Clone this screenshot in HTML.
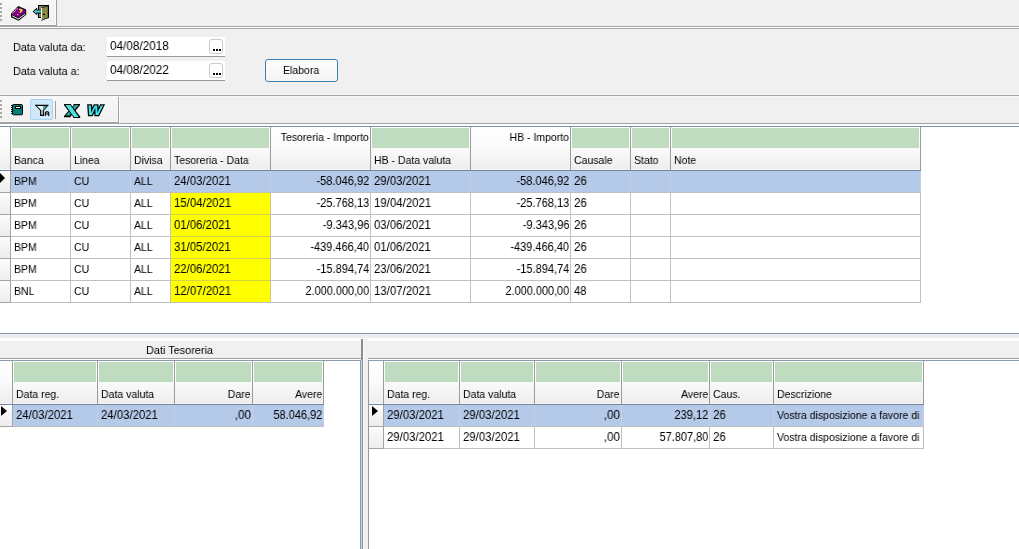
<!DOCTYPE html>
<html><head><meta charset="utf-8"><style>
html,body{margin:0;padding:0;}
body{width:1019px;height:549px;overflow:hidden;position:relative;background:#f0f0f0;font-family:"Liberation Sans", sans-serif;color:#000;}
body>div,body>span,body>svg{position:absolute;box-sizing:content-box;}
svg{will-change:transform;}
.t{white-space:nowrap;line-height:1;will-change:transform;}
</style></head><body>
<div style="left:0px;top:0px;width:57px;height:25px;background:linear-gradient(#f8f8f8,#f0f0f0);"></div><div style="left:56px;top:0px;width:1px;height:25px;background:#a0a0a0;"></div><div style="left:55px;top:0px;width:1px;height:24px;background:#fafafa;"></div><div style="left:0px;top:24px;width:55px;height:1px;background:#fafafa;"></div><div style="left:0px;top:25px;width:57px;height:1px;background:#a0a0a0;"></div><div style="left:0px;top:3px;width:2px;height:2px;background:#a8a8a8;"></div><div style="left:0px;top:7px;width:2px;height:2px;background:#a8a8a8;"></div><div style="left:0px;top:11px;width:2px;height:2px;background:#a8a8a8;"></div><div style="left:0px;top:15px;width:2px;height:2px;background:#a8a8a8;"></div><div style="left:0px;top:19px;width:2px;height:2px;background:#a8a8a8;"></div><div style="left:0px;top:26px;width:1019px;height:1px;background:#a4a4a4;"></div><div style="left:0px;top:27px;width:1019px;height:1px;background:#ffffff;"></div><div style="left:0px;top:28px;width:1019px;height:1px;background:#a4a4a4;"></div><div style="left:0px;top:94px;width:1019px;height:1px;background:#fafafa;"></div><div style="left:0px;top:95px;width:1019px;height:1px;background:#a4a4a4;"></div><div style="left:0px;top:96px;width:1019px;height:1px;background:#f8f8f8;"></div><div style="left:0px;top:97px;width:119px;height:25px;background:linear-gradient(#f8f8f8,#f0f0f0);"></div><div style="left:118px;top:97px;width:1px;height:26px;background:#a0a0a0;"></div><div style="left:117px;top:97px;width:1px;height:24px;background:#fafafa;"></div><div style="left:0px;top:121px;width:117px;height:1px;background:#fafafa;"></div><div style="left:0px;top:122px;width:119px;height:1px;background:#a0a0a0;"></div><div style="left:119px;top:97px;width:1px;height:26px;background:#fcfcfc;"></div><div style="left:0px;top:123px;width:1019px;height:1px;background:#a4a4a4;"></div><div style="left:0px;top:124px;width:1019px;height:2px;background:#ffffff;"></div><div style="left:0px;top:100px;width:2px;height:2px;background:#a8a8a8;"></div><div style="left:0px;top:104px;width:2px;height:2px;background:#a8a8a8;"></div><div style="left:0px;top:108px;width:2px;height:2px;background:#a8a8a8;"></div><div style="left:0px;top:112px;width:2px;height:2px;background:#a8a8a8;"></div><div style="left:0px;top:116px;width:2px;height:2px;background:#a8a8a8;"></div><div style="left:30px;top:99px;width:21px;height:19px;background:#cfe8fa;border:1px solid #aad4f2;border-radius:2px;"></div><div style="left:55px;top:101px;width:1px;height:18px;background:#a0a0a0;"></div><div style="left:0px;top:127px;width:1019px;height:206px;background:#ffffff;"></div><div style="left:0px;top:126px;width:1019px;height:1px;background:#8390a0;"></div><span class="t " style="left:13px;top:41.16px;font-size:11.62px;transform:scaleX(0.9294);transform-origin:left;">Data valuta da:</span><span class="t " style="left:13px;top:65.16px;font-size:11.62px;transform:scaleX(0.9294);transform-origin:left;">Data valuta a:</span><div style="left:107px;top:37px;width:118px;height:19px;background:#fff;border-bottom:1px solid #9a9a9a;"></div><span class="t" style="left:109.5px;top:39.6727px;font-size:12.2px;transform:scaleX(0.9625);transform-origin:left;">04/08/2018</span><div style="left:209px;top:39px;width:12px;height:13px;background:#fff;border:1px solid #cacaca;border-radius:3px;"></div><div style="left:213px;top:49px;width:2px;height:2px;background:#000;"></div><div style="left:216px;top:49px;width:2px;height:2px;background:#000;"></div><div style="left:219px;top:49px;width:2px;height:2px;background:#000;"></div><div style="left:107px;top:61px;width:118px;height:19px;background:#fff;border-bottom:1px solid #9a9a9a;"></div><span class="t" style="left:109.5px;top:63.6727px;font-size:12.2px;transform:scaleX(0.9641);transform-origin:left;">04/08/2022</span><div style="left:209px;top:63px;width:12px;height:13px;background:#fff;border:1px solid #cacaca;border-radius:3px;"></div><div style="left:213px;top:73px;width:2px;height:2px;background:#000;"></div><div style="left:216px;top:73px;width:2px;height:2px;background:#000;"></div><div style="left:219px;top:73px;width:2px;height:2px;background:#000;"></div><div style="left:265px;top:59px;width:71px;height:21px;border:1px solid #3c7fb1;border-radius:3px;background:linear-gradient(#fdfdfd,#f4f4f4);"></div><span class="t " style="left:283px;top:65.44px;font-size:11.30px;transform:scaleX(0.9294);transform-origin:left;">Elabora</span><div style="left:0px;top:127px;width:921px;height:43px;background:linear-gradient(#ffffff 0%,#fafafa 50%,#ededed 100%);"></div><div style="left:0px;top:170px;width:921px;height:1px;background:#76869a;"></div><div style="left:0px;top:169px;width:921px;height:1px;background:#f6f8fb;"></div><div style="left:11px;top:171px;width:909px;height:21px;background:#b5c9e8;"></div><div style="left:0px;top:192px;width:921px;height:1px;background:#c0c0c0;"></div><div style="left:0px;top:214px;width:921px;height:1px;background:#c0c0c0;"></div><div style="left:0px;top:236px;width:921px;height:1px;background:#c0c0c0;"></div><div style="left:0px;top:258px;width:921px;height:1px;background:#c0c0c0;"></div><div style="left:0px;top:280px;width:921px;height:1px;background:#c0c0c0;"></div><div style="left:0px;top:302px;width:921px;height:1px;background:#c0c0c0;"></div><div style="left:171px;top:193px;width:99px;height:21px;background:#ffff00;"></div><div style="left:171px;top:215px;width:99px;height:21px;background:#ffff00;"></div><div style="left:171px;top:237px;width:99px;height:21px;background:#ffff00;"></div><div style="left:171px;top:259px;width:99px;height:21px;background:#ffff00;"></div><div style="left:171px;top:281px;width:99px;height:21px;background:#ffff00;"></div><div style="left:0px;top:171px;width:10px;height:21px;background:linear-gradient(#fcfcfc,#ededed);"></div><div style="left:0px;top:192px;width:10px;height:1px;background:#a4a4a4;"></div><div style="left:0px;top:193px;width:10px;height:21px;background:linear-gradient(#fcfcfc,#ededed);"></div><div style="left:0px;top:214px;width:10px;height:1px;background:#a4a4a4;"></div><div style="left:0px;top:215px;width:10px;height:21px;background:linear-gradient(#fcfcfc,#ededed);"></div><div style="left:0px;top:236px;width:10px;height:1px;background:#a4a4a4;"></div><div style="left:0px;top:237px;width:10px;height:21px;background:linear-gradient(#fcfcfc,#ededed);"></div><div style="left:0px;top:258px;width:10px;height:1px;background:#a4a4a4;"></div><div style="left:0px;top:259px;width:10px;height:21px;background:linear-gradient(#fcfcfc,#ededed);"></div><div style="left:0px;top:280px;width:10px;height:1px;background:#a4a4a4;"></div><div style="left:0px;top:281px;width:10px;height:21px;background:linear-gradient(#fcfcfc,#ededed);"></div><div style="left:0px;top:302px;width:10px;height:1px;background:#a4a4a4;"></div><div style="left:10px;top:127px;width:1px;height:43px;background:#9c9c9c;"></div><div style="left:10px;top:171px;width:1px;height:132px;background:#a4a4a4;"></div><div style="left:70px;top:127px;width:1px;height:43px;background:#9c9c9c;"></div><div style="left:70px;top:171px;width:1px;height:132px;background:#c0c0c0;"></div><div style="left:70px;top:171px;width:1px;height:21px;background:#c3d1e8;"></div><div style="left:130px;top:127px;width:1px;height:43px;background:#9c9c9c;"></div><div style="left:130px;top:171px;width:1px;height:132px;background:#c0c0c0;"></div><div style="left:130px;top:171px;width:1px;height:21px;background:#c3d1e8;"></div><div style="left:170px;top:127px;width:1px;height:43px;background:#9c9c9c;"></div><div style="left:170px;top:171px;width:1px;height:132px;background:#c0c0c0;"></div><div style="left:170px;top:171px;width:1px;height:21px;background:#c3d1e8;"></div><div style="left:270px;top:127px;width:1px;height:43px;background:#9c9c9c;"></div><div style="left:270px;top:171px;width:1px;height:132px;background:#c0c0c0;"></div><div style="left:270px;top:171px;width:1px;height:21px;background:#c3d1e8;"></div><div style="left:370px;top:127px;width:1px;height:43px;background:#9c9c9c;"></div><div style="left:370px;top:171px;width:1px;height:132px;background:#c0c0c0;"></div><div style="left:370px;top:171px;width:1px;height:21px;background:#c3d1e8;"></div><div style="left:470px;top:127px;width:1px;height:43px;background:#9c9c9c;"></div><div style="left:470px;top:171px;width:1px;height:132px;background:#c0c0c0;"></div><div style="left:470px;top:171px;width:1px;height:21px;background:#c3d1e8;"></div><div style="left:570px;top:127px;width:1px;height:43px;background:#9c9c9c;"></div><div style="left:570px;top:171px;width:1px;height:132px;background:#c0c0c0;"></div><div style="left:570px;top:171px;width:1px;height:21px;background:#c3d1e8;"></div><div style="left:630px;top:127px;width:1px;height:43px;background:#9c9c9c;"></div><div style="left:630px;top:171px;width:1px;height:132px;background:#c0c0c0;"></div><div style="left:630px;top:171px;width:1px;height:21px;background:#c3d1e8;"></div><div style="left:670px;top:127px;width:1px;height:43px;background:#9c9c9c;"></div><div style="left:670px;top:171px;width:1px;height:132px;background:#c0c0c0;"></div><div style="left:670px;top:171px;width:1px;height:21px;background:#c3d1e8;"></div><div style="left:920px;top:127px;width:1px;height:43px;background:#9c9c9c;"></div><div style="left:920px;top:171px;width:1px;height:132px;background:#c0c0c0;"></div><div style="left:920px;top:171px;width:1px;height:21px;background:#c3d1e8;"></div><div style="left:171px;top:214px;width:99px;height:1px;background:#d6d640;"></div><div style="left:270px;top:193px;width:1px;height:21px;background:#c8c888;"></div><div style="left:171px;top:236px;width:99px;height:1px;background:#d6d640;"></div><div style="left:270px;top:215px;width:1px;height:21px;background:#c8c888;"></div><div style="left:171px;top:258px;width:99px;height:1px;background:#d6d640;"></div><div style="left:270px;top:237px;width:1px;height:21px;background:#c8c888;"></div><div style="left:171px;top:280px;width:99px;height:1px;background:#d6d640;"></div><div style="left:270px;top:259px;width:1px;height:21px;background:#c8c888;"></div><div style="left:270px;top:281px;width:1px;height:21px;background:#c8c888;"></div><div style="left:12px;top:128px;width:57px;height:20px;background:#c0dcc0;"></div><span class="t " style="left:14px;top:155.44px;font-size:11.30px;transform:scaleX(0.9294);transform-origin:left;">Banca</span><div style="left:72px;top:128px;width:57px;height:20px;background:#c0dcc0;"></div><span class="t " style="left:74px;top:155.44px;font-size:11.30px;transform:scaleX(0.9294);transform-origin:left;">Linea</span><div style="left:132px;top:128px;width:37px;height:20px;background:#c0dcc0;"></div><span class="t " style="left:134px;top:155.44px;font-size:11.30px;transform:scaleX(0.9294);transform-origin:left;">Divisa</span><div style="left:172px;top:128px;width:97px;height:20px;background:#c0dcc0;"></div><span class="t " style="left:174px;top:155.44px;font-size:11.30px;transform:scaleX(0.9294);transform-origin:left;">Tesoreria - Data</span><span class="t r " style="right:650.2px;top:132.44px;font-size:11.30px;transform:scaleX(0.9294);transform-origin:right;">Tesoreria - Importo</span><div style="left:372px;top:128px;width:97px;height:20px;background:#c0dcc0;"></div><span class="t " style="left:374px;top:155.44px;font-size:11.30px;transform:scaleX(0.9294);transform-origin:left;">HB - Data valuta</span><span class="t r " style="right:450.20000000000005px;top:132.44px;font-size:11.30px;transform:scaleX(0.9294);transform-origin:right;">HB - Importo</span><div style="left:572px;top:128px;width:57px;height:20px;background:#c0dcc0;"></div><span class="t " style="left:574px;top:155.44px;font-size:11.30px;transform:scaleX(0.9294);transform-origin:left;">Causale</span><div style="left:632px;top:128px;width:37px;height:20px;background:#c0dcc0;"></div><span class="t " style="left:634px;top:155.44px;font-size:11.30px;transform:scaleX(0.9294);transform-origin:left;">Stato</span><div style="left:672px;top:128px;width:247px;height:20px;background:#c0dcc0;"></div><span class="t " style="left:674px;top:155.44px;font-size:11.30px;transform:scaleX(0.9294);transform-origin:left;">Note</span><span class="t " style="left:14px;top:176.44px;font-size:11.30px;transform:scaleX(0.9294);transform-origin:left;">BPM</span><span class="t " style="left:74px;top:176.44px;font-size:11.30px;transform:scaleX(0.9294);transform-origin:left;">CU</span><span class="t " style="left:134px;top:176.44px;font-size:11.30px;transform:scaleX(0.9294);transform-origin:left;">ALL</span><span class="t" style="left:174px;top:174.6727px;font-size:12.2px;transform:scaleX(0.9316);transform-origin:left;">24/03/2021</span><span class="t" style="right:650px;top:174.6727px;font-size:12.2px;transform:scaleX(0.9064);transform-origin:right;">-58.046,92</span><span class="t" style="left:374px;top:174.6727px;font-size:12.2px;transform:scaleX(0.9316);transform-origin:left;">29/03/2021</span><span class="t" style="right:450px;top:174.6727px;font-size:12.2px;transform:scaleX(0.9064);transform-origin:right;">-58.046,92</span><span class="t" style="left:574px;top:174.6727px;font-size:12.2px;transform:scaleX(0.9478);transform-origin:left;">26</span><span class="t " style="left:14px;top:198.44px;font-size:11.30px;transform:scaleX(0.9294);transform-origin:left;">BPM</span><span class="t " style="left:74px;top:198.44px;font-size:11.30px;transform:scaleX(0.9294);transform-origin:left;">CU</span><span class="t " style="left:134px;top:198.44px;font-size:11.30px;transform:scaleX(0.9294);transform-origin:left;">ALL</span><span class="t" style="left:174px;top:196.6727px;font-size:12.2px;transform:scaleX(0.9370);transform-origin:left;">15/04/2021</span><span class="t" style="right:650px;top:196.6727px;font-size:12.2px;transform:scaleX(0.9048);transform-origin:right;">-25.768,13</span><span class="t" style="left:374px;top:196.6727px;font-size:12.2px;transform:scaleX(0.9370);transform-origin:left;">19/04/2021</span><span class="t" style="right:450px;top:196.6727px;font-size:12.2px;transform:scaleX(0.9048);transform-origin:right;">-25.768,13</span><span class="t" style="left:574px;top:196.6727px;font-size:12.2px;transform:scaleX(0.9478);transform-origin:left;">26</span><span class="t " style="left:14px;top:220.44px;font-size:11.30px;transform:scaleX(0.9294);transform-origin:left;">BPM</span><span class="t " style="left:74px;top:220.44px;font-size:11.30px;transform:scaleX(0.9294);transform-origin:left;">CU</span><span class="t " style="left:134px;top:220.44px;font-size:11.30px;transform:scaleX(0.9294);transform-origin:left;">ALL</span><span class="t" style="left:174px;top:218.6727px;font-size:12.2px;transform:scaleX(0.9300);transform-origin:left;">01/06/2021</span><span class="t" style="right:650px;top:218.6727px;font-size:12.2px;transform:scaleX(0.9078);transform-origin:right;">-9.343,96</span><span class="t" style="left:374px;top:218.6727px;font-size:12.2px;transform:scaleX(0.9300);transform-origin:left;">03/06/2021</span><span class="t" style="right:450px;top:218.6727px;font-size:12.2px;transform:scaleX(0.9078);transform-origin:right;">-9.343,96</span><span class="t" style="left:574px;top:218.6727px;font-size:12.2px;transform:scaleX(0.9478);transform-origin:left;">26</span><span class="t " style="left:14px;top:242.44px;font-size:11.30px;transform:scaleX(0.9294);transform-origin:left;">BPM</span><span class="t " style="left:74px;top:242.44px;font-size:11.30px;transform:scaleX(0.9294);transform-origin:left;">CU</span><span class="t " style="left:134px;top:242.44px;font-size:11.30px;transform:scaleX(0.9294);transform-origin:left;">ALL</span><span class="t" style="left:174px;top:240.6727px;font-size:12.2px;transform:scaleX(0.9292);transform-origin:left;">31/05/2021</span><span class="t" style="right:650px;top:240.6727px;font-size:12.2px;transform:scaleX(0.9017);transform-origin:right;">-439.466,40</span><span class="t" style="left:374px;top:240.6727px;font-size:12.2px;transform:scaleX(0.9300);transform-origin:left;">01/06/2021</span><span class="t" style="right:450px;top:240.6727px;font-size:12.2px;transform:scaleX(0.9017);transform-origin:right;">-439.466,40</span><span class="t" style="left:574px;top:240.6727px;font-size:12.2px;transform:scaleX(0.9478);transform-origin:left;">26</span><span class="t " style="left:14px;top:264.44px;font-size:11.30px;transform:scaleX(0.9294);transform-origin:left;">BPM</span><span class="t " style="left:74px;top:264.44px;font-size:11.30px;transform:scaleX(0.9294);transform-origin:left;">CU</span><span class="t " style="left:134px;top:264.44px;font-size:11.30px;transform:scaleX(0.9294);transform-origin:left;">ALL</span><span class="t" style="left:174px;top:262.6727px;font-size:12.2px;transform:scaleX(0.9316);transform-origin:left;">22/06/2021</span><span class="t" style="right:650px;top:262.6727px;font-size:12.2px;transform:scaleX(0.9017);transform-origin:right;">-15.894,74</span><span class="t" style="left:374px;top:262.6727px;font-size:12.2px;transform:scaleX(0.9316);transform-origin:left;">23/06/2021</span><span class="t" style="right:450px;top:262.6727px;font-size:12.2px;transform:scaleX(0.9017);transform-origin:right;">-15.894,74</span><span class="t" style="left:574px;top:262.6727px;font-size:12.2px;transform:scaleX(0.9478);transform-origin:left;">26</span><span class="t " style="left:14px;top:286.44px;font-size:11.30px;transform:scaleX(0.9294);transform-origin:left;">BNL</span><span class="t " style="left:74px;top:286.44px;font-size:11.30px;transform:scaleX(0.9294);transform-origin:left;">CU</span><span class="t " style="left:134px;top:286.44px;font-size:11.30px;transform:scaleX(0.9294);transform-origin:left;">ALL</span><span class="t" style="left:174px;top:284.6727px;font-size:12.2px;transform:scaleX(0.9370);transform-origin:left;">12/07/2021</span><span class="t" style="right:650px;top:284.6727px;font-size:12.2px;transform:scaleX(0.8952);transform-origin:right;">2.000.000,00</span><span class="t" style="left:374px;top:284.6727px;font-size:12.2px;transform:scaleX(0.9370);transform-origin:left;">13/07/2021</span><span class="t" style="right:450px;top:284.6727px;font-size:12.2px;transform:scaleX(0.8952);transform-origin:right;">2.000.000,00</span><span class="t" style="left:574px;top:284.6727px;font-size:12.2px;transform:scaleX(0.9255);transform-origin:left;">48</span><div style="left:0px;top:173px;width:0;height:0;border-top:5px solid transparent;border-bottom:5px solid transparent;border-left:5px solid #000;"></div><div style="left:0px;top:333px;width:1019px;height:1px;background:#8a9bb0;"></div><div style="left:0px;top:334px;width:1019px;height:4px;background:#ededed;"></div><div style="left:0px;top:338px;width:1019px;height:3px;background:#ffffff;"></div><div style="left:0px;top:341px;width:1019px;height:208px;background:#ffffff;"></div><div style="left:0px;top:341px;width:361px;height:17px;background:#f0f0f0;"></div><div style="left:0px;top:358px;width:361px;height:1px;background:#a0a0a0;"></div><span class="t " style="left:146px;top:344.07px;font-size:11.73px;transform:scaleX(0.9294);transform-origin:left;">Dati Tesoreria</span><div style="left:0px;top:359px;width:361px;height:1px;background:#ffffff;"></div><div style="left:0px;top:360px;width:360px;height:1px;background:#8a9bb0;"></div><div style="left:360px;top:360px;width:1px;height:189px;background:#8a9bb0;"></div><div style="left:361px;top:339px;width:1px;height:210px;background:#c8d8ea;"></div><div style="left:361px;top:339px;width:2px;height:1px;background:#808080;"></div><div style="left:362px;top:339px;width:1px;height:210px;background:#8c8c8c;"></div><div style="left:363px;top:339px;width:5px;height:210px;background:#f0f0f0;"></div><div style="left:363px;top:339px;width:1px;height:210px;background:#fafafa;"></div><div style="left:361px;top:339px;width:1px;height:21px;background:#8c8c8c;"></div><div style="left:368px;top:341px;width:651px;height:17px;background:#f0f0f0;"></div><div style="left:368px;top:358px;width:651px;height:1px;background:#a0a0a0;"></div><div style="left:368px;top:360px;width:651px;height:1px;background:#8a9bb0;"></div><div style="left:368px;top:360px;width:1px;height:189px;background:#8a9bb0;"></div><div style="left:0px;top:361px;width:324px;height:43px;background:linear-gradient(#ffffff 0%,#fafafa 50%,#ededed 100%);"></div><div style="left:0px;top:404px;width:324px;height:1px;background:#76869a;"></div><div style="left:0px;top:403px;width:324px;height:1px;background:#f6f8fb;"></div><div style="left:13px;top:405px;width:310px;height:21px;background:#b5c9e8;"></div><div style="left:0px;top:426px;width:324px;height:1px;background:#c0c0c0;"></div><div style="left:0px;top:405px;width:12px;height:21px;background:linear-gradient(#fcfcfc,#ededed);"></div><div style="left:0px;top:426px;width:12px;height:1px;background:#a4a4a4;"></div><div style="left:12px;top:361px;width:1px;height:43px;background:#9c9c9c;"></div><div style="left:12px;top:405px;width:1px;height:22px;background:#a4a4a4;"></div><div style="left:97px;top:361px;width:1px;height:43px;background:#9c9c9c;"></div><div style="left:97px;top:405px;width:1px;height:22px;background:#c0c0c0;"></div><div style="left:97px;top:405px;width:1px;height:21px;background:#c3d1e8;"></div><div style="left:174px;top:361px;width:1px;height:43px;background:#9c9c9c;"></div><div style="left:174px;top:405px;width:1px;height:22px;background:#c0c0c0;"></div><div style="left:174px;top:405px;width:1px;height:21px;background:#c3d1e8;"></div><div style="left:252px;top:361px;width:1px;height:43px;background:#9c9c9c;"></div><div style="left:252px;top:405px;width:1px;height:22px;background:#c0c0c0;"></div><div style="left:252px;top:405px;width:1px;height:21px;background:#c3d1e8;"></div><div style="left:323px;top:361px;width:1px;height:43px;background:#9c9c9c;"></div><div style="left:323px;top:405px;width:1px;height:22px;background:#c0c0c0;"></div><div style="left:323px;top:405px;width:1px;height:21px;background:#c3d1e8;"></div><div style="left:14px;top:362px;width:82px;height:20px;background:#c0dcc0;"></div><span class="t " style="left:16px;top:389.44px;font-size:11.30px;transform:scaleX(0.9294);transform-origin:left;">Data reg.</span><div style="left:99px;top:362px;width:74px;height:20px;background:#c0dcc0;"></div><span class="t " style="left:101px;top:389.44px;font-size:11.30px;transform:scaleX(0.9294);transform-origin:left;">Data valuta</span><div style="left:176px;top:362px;width:75px;height:20px;background:#c0dcc0;"></div><span class="t r " style="right:768.2px;top:389.44px;font-size:11.30px;transform:scaleX(0.9294);transform-origin:right;">Dare</span><div style="left:254px;top:362px;width:68px;height:20px;background:#c0dcc0;"></div><span class="t r " style="right:697.2px;top:389.44px;font-size:11.30px;transform:scaleX(0.9294);transform-origin:right;">Avere</span><span class="t" style="left:16px;top:408.6727px;font-size:12.2px;transform:scaleX(0.9316);transform-origin:left;">24/03/2021</span><span class="t" style="left:101px;top:408.6727px;font-size:12.2px;transform:scaleX(0.9316);transform-origin:left;">24/03/2021</span><span class="t" style="right:768px;top:408.6727px;font-size:12.2px;transform:scaleX(0.9610);transform-origin:right;">,00</span><span class="t" style="right:697px;top:408.6727px;font-size:12.2px;transform:scaleX(0.8993);transform-origin:right;">58.046,92</span><div style="left:1px;top:406px;width:0;height:0;border-top:5.5px solid transparent;border-bottom:5.5px solid transparent;border-left:6px solid #000;"></div><div style="left:369px;top:361px;width:555px;height:43px;background:linear-gradient(#ffffff 0%,#fafafa 50%,#ededed 100%);"></div><div style="left:369px;top:404px;width:555px;height:1px;background:#76869a;"></div><div style="left:369px;top:403px;width:555px;height:1px;background:#f6f8fb;"></div><div style="left:384px;top:405px;width:539px;height:21px;background:#b5c9e8;"></div><div style="left:369px;top:426px;width:555px;height:1px;background:#c0c0c0;"></div><div style="left:369px;top:448px;width:555px;height:1px;background:#c0c0c0;"></div><div style="left:369px;top:405px;width:14px;height:21px;background:linear-gradient(#fcfcfc,#ededed);"></div><div style="left:369px;top:426px;width:14px;height:1px;background:#a4a4a4;"></div><div style="left:369px;top:427px;width:14px;height:21px;background:linear-gradient(#fcfcfc,#ededed);"></div><div style="left:369px;top:448px;width:14px;height:1px;background:#a4a4a4;"></div><div style="left:383px;top:361px;width:1px;height:43px;background:#9c9c9c;"></div><div style="left:383px;top:405px;width:1px;height:44px;background:#a4a4a4;"></div><div style="left:459px;top:361px;width:1px;height:43px;background:#9c9c9c;"></div><div style="left:459px;top:405px;width:1px;height:44px;background:#c0c0c0;"></div><div style="left:459px;top:405px;width:1px;height:21px;background:#c3d1e8;"></div><div style="left:534px;top:361px;width:1px;height:43px;background:#9c9c9c;"></div><div style="left:534px;top:405px;width:1px;height:44px;background:#c0c0c0;"></div><div style="left:534px;top:405px;width:1px;height:21px;background:#c3d1e8;"></div><div style="left:621px;top:361px;width:1px;height:43px;background:#9c9c9c;"></div><div style="left:621px;top:405px;width:1px;height:44px;background:#c0c0c0;"></div><div style="left:621px;top:405px;width:1px;height:21px;background:#c3d1e8;"></div><div style="left:709px;top:361px;width:1px;height:43px;background:#9c9c9c;"></div><div style="left:709px;top:405px;width:1px;height:44px;background:#c0c0c0;"></div><div style="left:709px;top:405px;width:1px;height:21px;background:#c3d1e8;"></div><div style="left:773px;top:361px;width:1px;height:43px;background:#9c9c9c;"></div><div style="left:773px;top:405px;width:1px;height:44px;background:#c0c0c0;"></div><div style="left:773px;top:405px;width:1px;height:21px;background:#c3d1e8;"></div><div style="left:923px;top:361px;width:1px;height:43px;background:#9c9c9c;"></div><div style="left:923px;top:405px;width:1px;height:44px;background:#c0c0c0;"></div><div style="left:923px;top:405px;width:1px;height:21px;background:#c3d1e8;"></div><div style="left:385px;top:362px;width:73px;height:20px;background:#c0dcc0;"></div><span class="t " style="left:387px;top:389.44px;font-size:11.30px;transform:scaleX(0.9294);transform-origin:left;">Data reg.</span><div style="left:461px;top:362px;width:72px;height:20px;background:#c0dcc0;"></div><span class="t " style="left:463px;top:389.44px;font-size:11.30px;transform:scaleX(0.9294);transform-origin:left;">Data valuta</span><div style="left:536px;top:362px;width:84px;height:20px;background:#c0dcc0;"></div><span class="t r " style="right:399.20000000000005px;top:389.44px;font-size:11.30px;transform:scaleX(0.9294);transform-origin:right;">Dare</span><div style="left:623px;top:362px;width:85px;height:20px;background:#c0dcc0;"></div><span class="t r " style="right:311.20000000000005px;top:389.44px;font-size:11.30px;transform:scaleX(0.9294);transform-origin:right;">Avere</span><div style="left:711px;top:362px;width:61px;height:20px;background:#c0dcc0;"></div><span class="t " style="left:713px;top:389.44px;font-size:11.30px;transform:scaleX(0.9294);transform-origin:left;">Caus.</span><div style="left:775px;top:362px;width:147px;height:20px;background:#c0dcc0;"></div><span class="t " style="left:777px;top:389.44px;font-size:11.30px;transform:scaleX(0.9294);transform-origin:left;">Descrizione</span><span class="t" style="left:387px;top:408.6727px;font-size:12.2px;transform:scaleX(0.9316);transform-origin:left;">29/03/2021</span><span class="t" style="left:463px;top:408.6727px;font-size:12.2px;transform:scaleX(0.9316);transform-origin:left;">29/03/2021</span><span class="t" style="right:399px;top:408.6727px;font-size:12.2px;transform:scaleX(0.9610);transform-origin:right;">,00</span><span class="t" style="right:311px;top:408.6727px;font-size:12.2px;transform:scaleX(0.9086);transform-origin:right;">239,12</span><span class="t" style="left:713px;top:408.6727px;font-size:12.2px;transform:scaleX(0.9478);transform-origin:left;">26</span><span class="t " style="left:777px;top:410.44px;font-size:11.30px;transform:scaleX(0.9294);transform-origin:left;">Vostra disposizione a favore di</span><span class="t" style="left:387px;top:430.6727px;font-size:12.2px;transform:scaleX(0.9316);transform-origin:left;">29/03/2021</span><span class="t" style="left:463px;top:430.6727px;font-size:12.2px;transform:scaleX(0.9316);transform-origin:left;">29/03/2021</span><span class="t" style="right:399px;top:430.6727px;font-size:12.2px;transform:scaleX(0.9610);transform-origin:right;">,00</span><span class="t" style="right:311px;top:430.6727px;font-size:12.2px;transform:scaleX(0.8968);transform-origin:right;">57.807,80</span><span class="t" style="left:713px;top:430.6727px;font-size:12.2px;transform:scaleX(0.9478);transform-origin:left;">26</span><span class="t " style="left:777px;top:432.44px;font-size:11.30px;transform:scaleX(0.9294);transform-origin:left;">Vostra disposizione a favore di</span><div style="left:372px;top:406px;width:0;height:0;border-top:5.5px solid transparent;border-bottom:5.5px solid transparent;border-left:6px solid #000;"></div>

<svg style="left:10px;top:4px;" width="18" height="18" viewBox="0 0 18 18">
 <polygon points="1,9.6 8.2,2 16.2,5.6 16.2,10.8 8.6,16.8 1,13.2" fill="#000"/>
 <polygon points="2,9.6 8.2,3 15.2,6.2 15.2,8.4 8.2,13.4 2,10.6" fill="#800080"/>
 <polygon points="2,11.2 8.2,14.4 15.2,9.4 15.2,10.4 8.4,15.6 2,12.2" fill="#fff"/>
 <g fill="#fff"><rect x="2.4" y="8.4" width="1" height="1"/><rect x="3.8" y="7" width="1" height="1"/><rect x="5.2" y="5.6" width="1" height="1"/><rect x="6.6" y="4.2" width="1" height="1"/></g>
 <path d="M9.4,5.9 Q10.6,4.9 11.9,6 Q12,7 10.6,7.6 L10,8.8" stroke="#ffff30" stroke-width="1.3" fill="none"/>
 <rect x="7.2" y="10" width="1.2" height="1.2" fill="#ffb0a0"/>
</svg>
<svg style="left:31px;top:3px;" width="20" height="20" viewBox="0 0 20 20">
 <rect x="7.5" y="2.5" width="10" height="12" fill="#808080" stroke="#000" stroke-width="1"/>
 <polygon points="10,5 17,2.5 17.8,2.5 17.8,15 10,17.8" fill="#000"/>
 <polygon points="11,5.2 16.8,3.2 16.8,14.4 11,16.8" fill="#8a8a48"/>
 <rect x="10" y="5" width="1" height="12" fill="#ffffc8"/>
 <rect x="12" y="10.8" width="2" height="1.2" fill="#000"/>
 <polygon points="1.6,8.6 6.2,4.6 6.2,6.8 10,6.8 10,10.4 6.2,10.4 6.2,12.6" fill="#000"/>
 <polygon points="2.9,8.6 5.4,6.4 5.4,7.6 10,7.6 10,9.6 5.4,9.6 5.4,10.8" fill="#48dce8"/>
</svg>
<svg style="left:11px;top:103px;" width="14" height="14" viewBox="0 0 14 14">
 <rect x="1.5" y="1.5" width="10" height="10.3" rx="1" fill="#008078" stroke="#000" stroke-width="1"/>
 <rect x="4.5" y="3.5" width="5" height="2" fill="#fff" stroke="#000" stroke-width="1"/>
 <g fill="#000"><rect x="0" y="2" width="1.5" height="1"/><rect x="0" y="4" width="1.5" height="1"/><rect x="0" y="6" width="1.5" height="1"/><rect x="0" y="8" width="1.5" height="1"/><rect x="0" y="10" width="1.5" height="1"/></g>
</svg>
<svg style="left:33px;top:104px;" width="18" height="14" viewBox="0 0 18 14">
 <polygon points="1.6,0.8 16,0.8 10.9,6.4 10.9,11.9 7.1,11.9 7.1,6.4" fill="#000"/>
 <polygon points="3.9,2.1 13.7,2.1 9.7,6.2 9.7,10.7 8.3,10.7 8.3,6.2" fill="#e4f6f6"/>
 <polygon points="10.4,2.1 13.7,2.1 9.7,6.2 9.7,8.4" fill="#2a9a94"/>
 <path d="M12.3,12 V8.7 L13.1,7.9 H14.9 L15.7,8.7 V12 M12.3,10 H15.7" stroke="#000" stroke-width="1.1" fill="none"/>
</svg>
<svg style="left:63px;top:103px;" width="19" height="16" viewBox="0 0 19 16">
 <polygon points="10.5,1 17,1 17,2.2 7.6,13.4 7.6,14.2 1,14.2 1,13 10.5,2.2" fill="#000"/>
 <polygon points="11.8,2 15.6,2 6.6,12.6 2.6,12.6" fill="#2aa8a0"/>
 <polygon points="1,1 8.2,1 8.2,2 17.2,13.6 17.2,15 10.2,15 10.2,14 1,2.2" fill="#000"/>
 <polygon points="2.4,2 7.2,2 15.8,13.9 11,13.9" fill="#48e4e4"/>
</svg>
<svg style="left:86px;top:102px;" width="19" height="16" viewBox="0 0 19 16">
 <text x="0.6" y="12.8" font-family="Liberation Sans" font-weight="bold" font-size="14" fill="#40e8f0" stroke="#000" stroke-width="2.4" paint-order="stroke" transform="skewX(-12) translate(2.6,0)" textLength="14.6" lengthAdjust="spacingAndGlyphs">W</text>
</svg>

</body></html>
